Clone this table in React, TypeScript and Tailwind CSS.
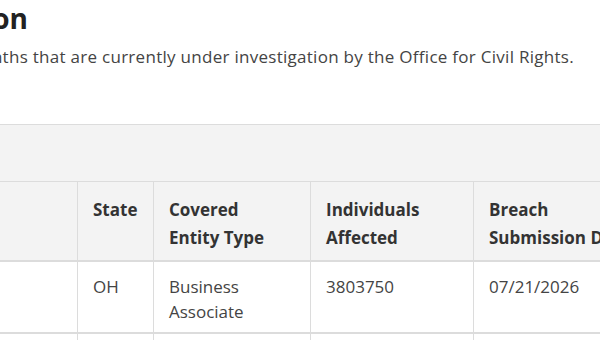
type Breach = {
  name: string;
  state: string;
  entityType: string;
  affected: number;
  submitted: string;
};

const breaches: Breach[] = [
  {
    name: "",
    state: "OH",
    entityType: "Business Associate",
    affected: 3803750,
    submitted: "07/21/2026",
  },
  {
    name: "",
    state: "TX",
    entityType: "Healthcare Provider",
    affected: 12450,
    submitted: "07/18/2026",
  },
];

const cols = "grid grid-cols-[77px_76px_157px_163px_240px]";

function HeaderCell({ children, first }: { children?: React.ReactNode; first?: boolean }) {
  return (
    <div
      className={
        first
          ? "pl-[15px] pr-4 pt-[14px] pb-[8px]"
          : "border-l border-[#dcdcdc] pl-[15px] pr-4 pt-[14px] pb-[8px]"
      }
    >
      {children}
    </div>
  );
}

function BodyCell({ children, first }: { children?: React.ReactNode; first?: boolean }) {
  return (
    <div
      className={
        first
          ? "pl-[15px] pr-4 pt-[12px] pb-[8px]"
          : "border-l border-[#dcdcdc] pl-[15px] pr-4 pt-[12px] pb-[8px]"
      }
    >
      {children}
    </div>
  );
}

export default function App() {
  return (
    <div
      className="w-[600px] h-[340px] overflow-hidden bg-white text-[#333333]"
      style={{ fontFamily: '"Open Sans", "Noto Sans", sans-serif' }}
    >
      {/* heading is scrolled off to the left, so right-align its visible end */}
      <div className="flex w-[28px] justify-end whitespace-nowrap">
        <h1 className="text-[28px] leading-[36px] font-bold text-[#222222]">
          Cases Currently Under Investigation
        </h1>
      </div>

      <div className="mt-[9px] flex w-[574px] justify-end whitespace-nowrap">
        <p className="text-[17px] leading-[24px] tracking-[0.28px] text-[#444444]">
          This page lists all breaches reported within the last 24 months that are
          currently under investigation by the Office for Civil Rights.
        </p>
      </div>

      <div className="mt-[55px] w-[713px] border-t border-[#dcdcdc]">
        <div className="h-[56px] bg-[#f3f3f3]" />

        <div
          className={`${cols} border-t border-b-2 border-[#dcdcdc] bg-[#f3f3f3] text-[17px] leading-[28px] font-bold text-[#333333]`}
        >
          <HeaderCell first />
          <HeaderCell>State</HeaderCell>
          <HeaderCell>
            Covered
            <br />
            Entity Type
          </HeaderCell>
          <HeaderCell>
            Individuals
            <br />
            Affected
          </HeaderCell>
          <HeaderCell>
            <span className="whitespace-nowrap">Breach</span>
            <br />
            <span className="whitespace-nowrap">Submission Date</span>
          </HeaderCell>
        </div>

        {breaches.map((b, i) => (
          <div
            key={i}
            className={`${cols} border-b-2 border-[#dcdcdc] text-[17px] leading-[25px] text-[#444444]`}
          >
            <BodyCell first>{b.name}</BodyCell>
            <BodyCell>{b.state}</BodyCell>
            <BodyCell>{b.entityType}</BodyCell>
            <BodyCell>{b.affected}</BodyCell>
            <BodyCell>{b.submitted}</BodyCell>
          </div>
        ))}
      </div>
    </div>
  );
}
